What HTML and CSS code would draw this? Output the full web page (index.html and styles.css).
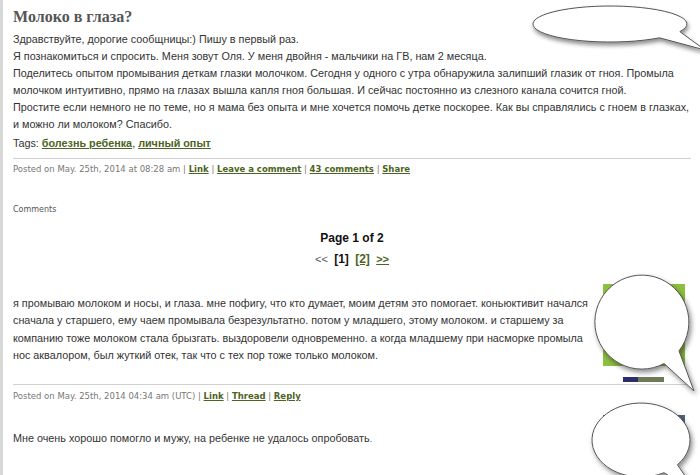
FILE: index.html
```html
<!DOCTYPE html>
<html>
<head>
<meta charset="utf-8">
<link rel="stylesheet" href="styles.css">
</head>
<body>
<div class="page">
  <div class="entry">
    <h1 class="title">Молоко в глаза?</h1>
    <div class="text">
      Здравствуйте, дорогие сообщницы:) Пишу в первый раз.<br>
      Я познакомиться и спросить. Меня зовут Оля. У меня двойня - мальчики на ГВ, нам 2 месяца.<br>
      Поделитесь опытом промывания деткам глазки молочком. Сегодня у одного с утра обнаружила залипший глазик от гноя. Промыла молочком интуитивно, прямо на глазах вышла капля гноя большая. И сейчас постоянно из слезного канала сочится гной.<br>
      Простите если немного не по теме, но я мама без опыта и мне хочется помочь детке поскорее. Как вы справлялись с гноем в глазках, и можно ли молоком? Спасибо.
    </div>
    <div class="tags">Tags: <a href="#">болезнь ребенка</a>, <a href="#">личный опыт</a></div>
    <div class="meta">Posted on May. 25th, 2014 at 08:28 am | <a href="#">Link</a> | <a href="#">Leave a comment</a> | <a href="#">43 comments</a> | <a href="#">Share</a></div>
  </div>

  <div class="comments-label">Comments</div>

  <div class="pager">
    <div class="pager-title">Page 1 of 2</div>
    <div class="pager-links"><span class="arrow">&lt;&lt;</span> <b>[1]</b> <a href="#" class="pnum">[2]</a> <a href="#" class="next">&gt;&gt;</a></div>
  </div>

  <div class="comment">
    <div class="comment-body">
      <div class="comment-text">я промываю молоком и носы, и глаза. мне пофигу, что кто думает, моим детям это помогает. коньюктивит начался сначала у старшего, ему чаем промывала безрезультатно. потом у младшего, этому молоком. и старшему за компанию тоже молоком стала брызгать. выздоровели одновременно. а когда младшему при насморке промыла нос аквалором, был жуткий отек, так что с тех пор тоже только молоком.</div>
      <div class="avatar green"><div class="avatar-foot"></div><div class="avatar-foot2"></div></div>
    </div>
    <div class="meta">Posted on May. 25th, 2014 04:34 am (UTC) | <a href="#">Link</a> | <a href="#">Thread</a> | <a href="#">Reply</a></div>
  </div>

  <div class="comment">
    <div class="comment-body">
      <div class="comment-text second">Мне очень хорошо помогло и мужу, на ребенке не удалось опробовать<span class="dot">.</span></div>
      <div class="avatar blue"></div>
    </div>
  </div>
</div>

<svg class="bubble bubble-top" width="175" height="60" viewBox="0 0 175 60">
  <defs>
    <filter id="sh1" x="-20%" y="-30%" width="140%" height="170%">
      <feDropShadow dx="1" dy="3" stdDeviation="2" flood-color="#000" flood-opacity="0.45"/>
    </filter>
  </defs>
  <path d="M 134.5 37.8 A 77 18 0 1 1 154.8 31.6 L 180 50 Z" fill="#fff" stroke="#555" stroke-width="1" filter="url(#sh1)"/>
</svg>

<svg class="bubble bubble-mid" width="112" height="130" viewBox="0 0 112 130">
  <defs>
    <filter id="sh2" x="-20%" y="-20%" width="140%" height="140%">
      <feDropShadow dx="2" dy="3" stdDeviation="2.5" flood-color="#000" flood-opacity="0.45"/>
    </filter>
  </defs>
  <path d="M 76.1 95.5 A 47 47 0 1 1 91 82.9 L 106 123 Z" fill="#fff" stroke="#555" stroke-width="1" filter="url(#sh2)"/>
</svg>

<svg class="bubble bubble-bot" width="115" height="77" viewBox="0 0 115 77">
  <defs>
    <filter id="sh3" x="-20%" y="-20%" width="140%" height="140%">
      <feDropShadow dx="2" dy="3" stdDeviation="2.5" flood-color="#000" flood-opacity="0.45"/>
    </filter>
  </defs>
  <path d="M 79 74.7 A 49 37 0 1 1 92.4 66.8 L 112 95 Z" fill="#fff" stroke="#555" stroke-width="1" filter="url(#sh3)"/>
</svg>
</body>
</html>
```

FILE: styles.css
```css
html, body {
  margin: 0;
  padding: 0;
  background: #fff;
  overflow: hidden;
}
body {
  width: 700px;
  height: 475px;
  position: relative;
  font-family: "Liberation Sans", Arial, sans-serif;
  color: #333;
}
.page {
  border-left: 3px solid #d8d8d8;
  padding: 7px 9px 0 10px;
  height: 475px;
  box-sizing: border-box;
  overflow: hidden;
}
.title {
  margin: 0 0 4px 0;
  font-family: "Liberation Serif", "Times New Roman", serif;
  font-size: 16px;
  font-weight: bold;
  color: #555;
  line-height: 20px;
}
.text {
  font-size: 10.8px;
  line-height: 17px;
}
.tags {
  font-size: 10.8px;
  line-height: 17px;
  margin-top: 2px;
}
.tags a {
  color: #4c6423;
  font-weight: bold;
  text-decoration: underline;
}
.meta {
  border-top: 1px solid #d0d0d0;
  margin-top: 6px;
  padding-top: 3px;
  font-family: "DejaVu Sans", Verdana, sans-serif;
  font-size: 8.5px;
  line-height: 14px;
  color: #777;
}
.meta a {
  color: #4c6423;
  font-weight: bold;
  text-decoration: underline;
}
.comments-label {
  margin-top: 28px;
  font-family: "DejaVu Sans", Verdana, sans-serif;
  font-size: 8px;
  color: #555;
  line-height: 12px;
}
.pager {
  margin-top: 14px;
  text-align: center;
  font-size: 12px;
  color: #111;
}
.pager-title {
  font-weight: bold;
  line-height: 16px;
}
.pager-links {
  margin-top: 5px;
  line-height: 16px;
  word-spacing: 3px;
}
.pager-links .arrow {
  color: #555;
  font-size: 11px;
}
.pager-links b {
  color: #111;
}
.pager-links .pnum {
  color: #4c6423;
  font-weight: bold;
}
.pager-links .next {
  color: #4c6423;
  font-weight: bold;
  font-size: 11px;
}
.comment-body {
  display: flex;
  gap: 8px;
  align-items: flex-start;
}
.comment-text {
  flex: 1;
  font-size: 10.8px;
  line-height: 17.3px;
  padding-top: 28px;
}
.comment-text.second {
  padding-top: 27px;
}
.dot {
  color: #4a7fb5;
}
.avatar {
  width: 82px;
  flex: none;
  position: relative;
  margin-right: 6px;
}
.avatar.green {
  background: linear-gradient(#8dc040 0, #8dc040 82px, transparent 82px);
  height: 100px;
  margin-top: 17px;
}
.avatar-foot {
  position: absolute;
  left: 20px;
  bottom: 2px;
  width: 15px;
  height: 5px;
  background: #2d2d6e;
}
.avatar-foot2 {
  position: absolute;
  left: 35px;
  bottom: 2px;
  width: 26px;
  height: 5px;
  background: #6d7a58;
}
.avatar.blue {
  background: #4e647a;
  height: 22px;
  margin-top: 12px;
}
.comment .meta {
  margin-top: 0;
  padding-top: 4px;
}
.bubble {
  position: absolute;
}
.bubble-top {
  left: 525px;
  top: 0;
}
.bubble-mid {
  left: 588px;
  top: 268px;
}
.bubble-bot {
  left: 585px;
  top: 398px;
}
```
